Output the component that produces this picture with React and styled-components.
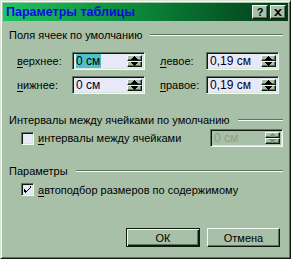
import React from 'react';
import styled, { createGlobalStyle } from 'styled-components';

const face = '#a8c0a8';
const light = '#d8e6d8';
const white = '#f4fbf4';
const shadow = '#5c745c';
const dark = '#101810';
const field = '#e8e8f8';

const Global = createGlobalStyle`
  html, body { margin: 0; padding: 0; background: ${face}; }
  body { font-family: "Liberation Sans", Arial, sans-serif; font-size: 11px; color: #000; }
`;

const Window = styled.div`
  box-sizing: border-box;
  width: 291px;
  height: 259px;
  background: ${face};
  border: 1px solid;
  border-color: ${light} ${dark} ${dark} ${light};
  box-shadow: inset 1px 1px ${white}, inset -1px -1px ${shadow};
  padding: 2px;
  display: flex;
  flex-direction: column;
`;

const TitleBar = styled.div`
  height: 18px;
  display: flex;
  align-items: center;
  padding: 0 2px 0 3px;
  background: linear-gradient(90deg, #1ec462 0%, #0c8a3c 45%, #013a16 100%);
`;

const Title = styled.div`
  flex: 1;
  font-weight: bold;
  font-size: 12.5px;
  color: #0a0ae6;
`;

const CapButton = styled.div`
  box-sizing: border-box;
  width: 16px;
  height: 14px;
  margin-left: ${p => (p.$gap ? '2px' : '0')};
  background: ${face};
  border: 1px solid;
  border-color: ${white} ${dark} ${dark} ${white};
  box-shadow: inset -1px -1px ${shadow};
  display: flex;
  align-items: center;
  justify-content: center;
  font-weight: bold;
  font-size: 11px;
  line-height: 1;
`;

const Content = styled.div`
  flex: 1;
  display: flex;
  flex-direction: column;
  padding: 0 5px 9px 6px;
`;

const GroupHead = styled.div`
  display: flex;
  align-items: center;
  height: 13px;
  margin-top: ${p => p.$top}px;
  &::after {
    content: "";
    flex: 1;
    margin-left: 8px;
    border-top: 1px solid ${shadow};
    border-bottom: 1px solid ${white};
  }
`;

const Grid = styled.div`
  display: grid;
  grid-template-columns: 55px 73px 15px 46px 73px;
  grid-auto-rows: 18px;
  row-gap: 6px;
  align-items: center;
  margin: 11px 0 0 8px;
`;

const Label = styled.span`
  white-space: nowrap;
  u { text-decoration: underline; text-underline-offset: 2px; }
`;

const Field = styled.div`
  box-sizing: border-box;
  width: 73px;
  height: 18px;
  display: flex;
  background: ${p => (p.$disabled ? face : field)};
  border: 1px solid;
  border-color: ${shadow} ${white} ${white} ${shadow};
  box-shadow: inset 1px 1px ${dark}, inset -1px -1px ${light};
  padding: 2px;
`;

const FieldText = styled.div`
  flex: 1;
  display: flex;
  align-items: center;
  padding-left: 1px;
  color: ${p => (p.$disabled ? '#8aa08a' : '#000020')};
  font-size: 12px;
`;

const Sel = styled.span`
  background: #4ec2c8;
  color: #000;
  padding-right: 1px;
`;

const Spin = styled.div`
  width: 15px;
  display: flex;
  flex-direction: column;
`;

const SpinBtn = styled.div`
  box-sizing: border-box;
  flex: 1;
  background: ${face};
  border: 1px solid;
  border-color: ${white} ${dark} ${dark} ${white};
  box-shadow: inset -1px -1px ${shadow};
  display: flex;
  align-items: center;
  justify-content: center;
  svg { display: block; }
`;

const CheckRow = styled.div`
  display: flex;
  align-items: center;
  height: ${p => p.$h}px;
  margin: ${p => p.$top}px 0 0 12px;
`;

const Box = styled.div`
  box-sizing: border-box;
  width: 13px;
  height: 13px;
  margin-right: 4px;
  background: ${field};
  border: 1px solid;
  border-color: ${shadow} ${white} ${white} ${shadow};
  box-shadow: inset 1px 1px ${dark}, inset -1px -1px ${light};
  display: flex;
  align-items: center;
  justify-content: center;
`;

const Spacer = styled.div`
  flex: 1;
`;

const Buttons = styled.div`
  display: flex;
  justify-content: flex-end;
  gap: 7px;
  margin-right: 3px;
`;

const Button = styled.div`
  box-sizing: border-box;
  width: ${p => p.$w}px;
  height: 19px;
  display: flex;
  align-items: center;
  justify-content: center;
  background: ${face};
  border: 1px solid;
  border-color: ${p => (p.$def ? `${dark}` : `${white} ${dark} ${dark} ${white}`)};
  box-shadow: ${p =>
    p.$def
      ? `inset 1px 1px ${white}, inset -1px -1px ${dark}, inset -2px -2px ${shadow}`
      : `inset -1px -1px ${shadow}`};
`;

const Arrow = ({ up, color = '#000' }) => (
  <svg width="7" height="4" viewBox="0 0 7 4">
    {up ? <path d="M3 0h1v1h1v1h1v1h1v1H0V3h1V2h1V1h1z" fill={color} /> : <path d="M0 0h7v1H6v1H5v1H4v1H3V3H2V2H1V1H0z" fill={color} />}
  </svg>
);

const Spinner = ({ value, selected, disabled }) => (
  <Field $disabled={disabled}>
    <FieldText $disabled={disabled}>{selected ? <Sel>{value}</Sel> : value}</FieldText>
    <Spin>
      <SpinBtn><Arrow up color={disabled ? '#7e947e' : '#000'} /></SpinBtn>
      <SpinBtn><Arrow color={disabled ? '#7e947e' : '#000'} /></SpinBtn>
    </Spin>
  </Field>
);

const Check = () => (
  <svg width="7" height="7" viewBox="0 0 7 7">
    <path d="M6 0h1v2H6v1H5v1H4v1H3v1H2v1H1V6H0V3h1v1h1v1h1V4h1V3h1V2h1z" fill="#000" />
  </svg>
);

export default function App() {
  return (
    <>
      <Global />
      <Window>
        <TitleBar>
          <Title>Параметры таблицы</Title>
          <CapButton>?</CapButton>
          <CapButton $gap>
            <svg width="8" height="7" viewBox="0 0 8 7">
              <path d="M0 0h2l2 2 2-2h2L5 3.5 8 7H6L4 5 2 7H0l3-3.5z" fill="#000" />
            </svg>
          </CapButton>
        </TitleBar>
        <Content>
          <GroupHead $top={7}>Поля ячеек по умолчанию</GroupHead>
          <Grid>
            <Label><u>в</u>ерхнее:</Label>
            <Spinner value="0 см" selected />
            <span />
            <Label><u>л</u>евое:</Label>
            <Spinner value="0,19 см" />
            <Label><u>н</u>ижнее:</Label>
            <Spinner value="0 см" />
            <span />
            <Label><u>п</u>равое:</Label>
            <Spinner value="0,19 см" />
          </Grid>
          <GroupHead $top={19}>Интервалы между ячейками по умолчанию</GroupHead>
          <CheckRow $h={18} $top={3}>
            <Box />
            <Label><u>и</u>нтервалы между ячейками</Label>
            <Spacer />
            <Spinner value="0 см" disabled />
          </CheckRow>
          <GroupHead $top={17}>Параметры</GroupHead>
          <CheckRow $h={13} $top={6}>
            <Box><Check /></Box>
            <Label><u>а</u>втоподбор размеров по содержимому</Label>
          </CheckRow>
          <Spacer />
          <Buttons>
            <Button $w={74} $def>ОК</Button>
            <Button $w={73}>Отмена</Button>
          </Buttons>
        </Content>
      </Window>
    </>
  );
}
